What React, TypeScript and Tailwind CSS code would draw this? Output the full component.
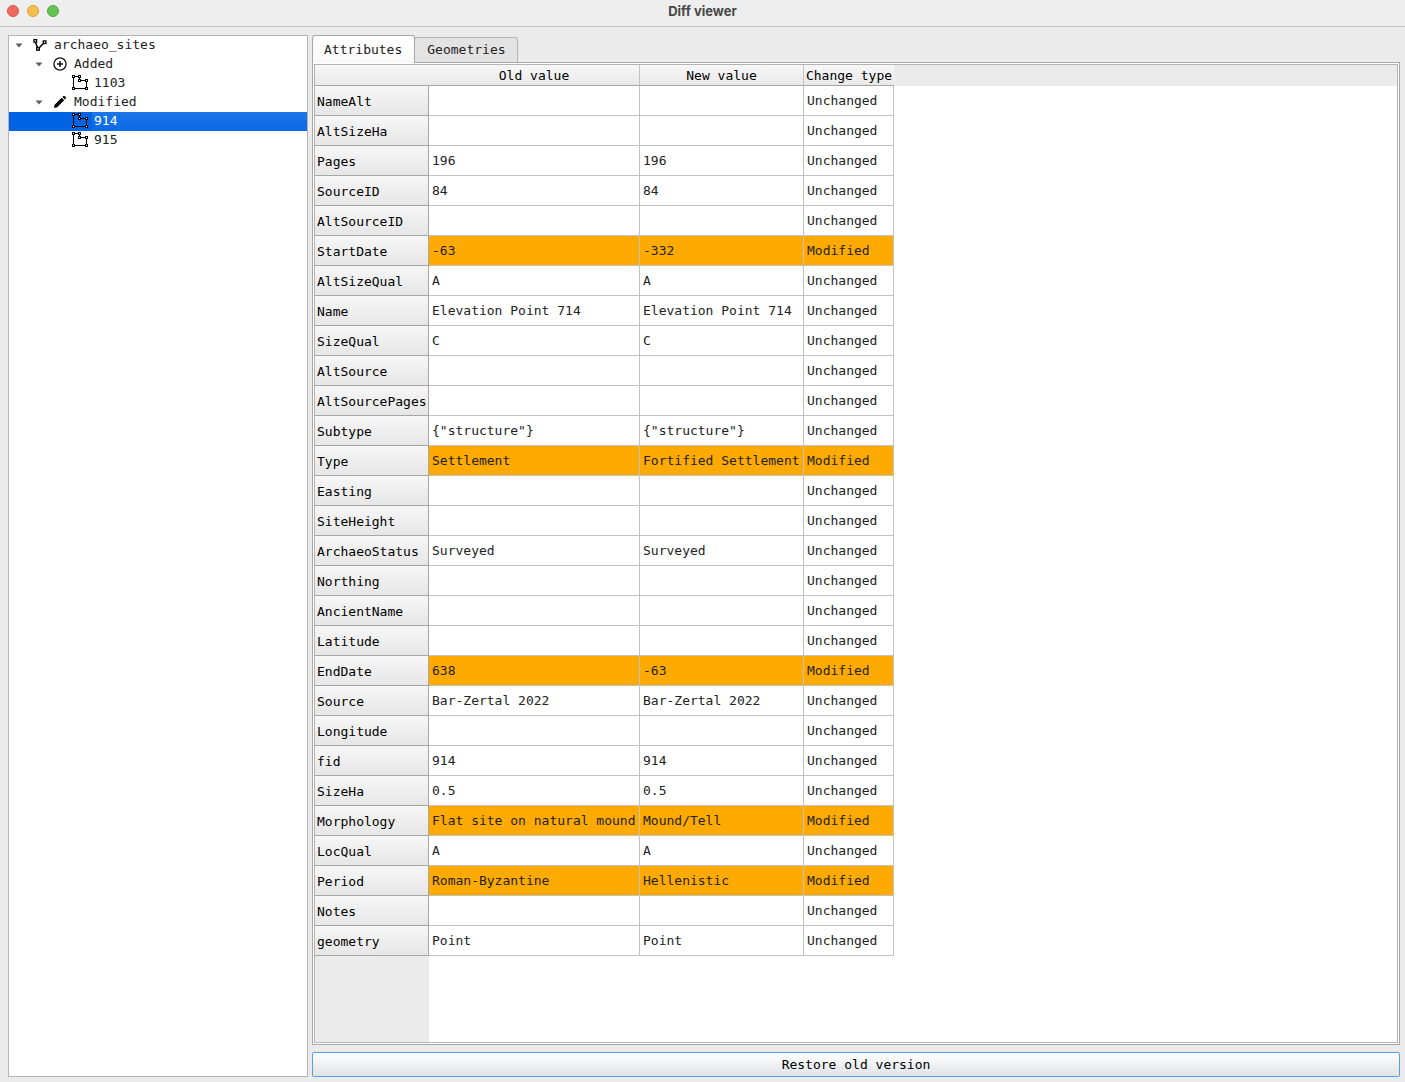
import React from "react";

type Row = { name: string; before: string; after: string };

const rows: Row[] = [
  { name: "NameAlt", before: "", after: "" },
  { name: "AltSizeHa", before: "", after: "" },
  { name: "Pages", before: "196", after: "196" },
  { name: "SourceID", before: "84", after: "84" },
  { name: "AltSourceID", before: "", after: "" },
  { name: "StartDate", before: "-63", after: "-332" },
  { name: "AltSizeQual", before: "A", after: "A" },
  { name: "Name", before: "Elevation Point 714", after: "Elevation Point 714" },
  { name: "SizeQual", before: "C", after: "C" },
  { name: "AltSource", before: "", after: "" },
  { name: "AltSourcePages", before: "", after: "" },
  { name: "Subtype", before: '{"structure"}', after: '{"structure"}' },
  { name: "Type", before: "Settlement", after: "Fortified Settlement" },
  { name: "Easting", before: "", after: "" },
  { name: "SiteHeight", before: "", after: "" },
  { name: "ArchaeoStatus", before: "Surveyed", after: "Surveyed" },
  { name: "Northing", before: "", after: "" },
  { name: "AncientName", before: "", after: "" },
  { name: "Latitude", before: "", after: "" },
  { name: "EndDate", before: "638", after: "-63" },
  { name: "Source", before: "Bar-Zertal 2022", after: "Bar-Zertal 2022" },
  { name: "Longitude", before: "", after: "" },
  { name: "fid", before: "914", after: "914" },
  { name: "SizeHa", before: "0.5", after: "0.5" },
  { name: "Morphology", before: "Flat site on natural mound", after: "Mound/Tell" },
  { name: "LocQual", before: "A", after: "A" },
  { name: "Period", before: "Roman-Byzantine", after: "Hellenistic" },
  { name: "Notes", before: "", after: "" },
  { name: "geometry", before: "Point", after: "Point" },
];

function Arrow() {
  return (
    <svg className="h-4 w-4 shrink-0" viewBox="0 0 16 16" aria-hidden="true">
      <path d="M4.500 6.500h7L8 10.500z" fill="#5f5f5f" />
    </svg>
  );
}

function LayerIcon() {
  return (
    <svg className="h-4 w-4 shrink-0" viewBox="0 0 16 16" fill="none" stroke="#000" aria-hidden="true">
      <path d="M3.500 5.500 6 11.500M6.500 11.500 12.300 5.500" strokeWidth="1.500" />
      <g fill="#fff" strokeWidth="1.300">
        <rect x="2" y="2.600" width="2.600" height="2.600" />
        <rect x="11.300" y="3.900" width="2.600" height="2.600" />
        <rect x="4.700" y="10.600" width="2.600" height="2.600" />
      </g>
    </svg>
  );
}

function PlusIcon() {
  return (
    <svg className="h-4 w-4 shrink-0" viewBox="0 0 16 16" fill="none" stroke="#111" aria-hidden="true">
      <circle cx="8" cy="8" r="6.100" strokeWidth="1.300" />
      <path d="M8 5v6M5 8h6" strokeWidth="1.500" />
    </svg>
  );
}

function PencilIcon() {
  return (
    <svg className="h-4 w-4 shrink-0" viewBox="0 0 16 16" fill="#000" aria-hidden="true">
      <path d="M2 14l.6-3.200 7.100-7 2.500 2.400L5.200 13.300zM10.400 3.100l.8-.8c.5-.5 1.200-.5 1.700 0l.8.8c.5.5.5 1.100 0 1.600l-.8.8z" />
    </svg>
  );
}

function PolygonIcon() {
  return (
    <svg className="mt-px h-4 w-4 shrink-0" viewBox="0 0 16 16" fill="none" stroke="#000" shapeRendering="crispEdges" aria-hidden="true">
      <path d="M1.500 1.500h6v4h7v8h-13z" />
      <g fill="#fff">
        <rect x="0.500" y="0.500" width="2" height="2" />
        <rect x="6.500" y="0.500" width="2" height="2" />
        <rect x="6.500" y="4.500" width="2" height="2" />
        <rect x="13.500" y="4.500" width="2" height="2" />
        <rect x="0.500" y="12.500" width="2" height="2" />
        <rect x="13.500" y="12.500" width="2" height="2" />
      </g>
    </svg>
  );
}

function FeatureItem({ label, selected }: { label: string; selected?: boolean }) {
  return (
    <li
      role="treeitem"
      aria-selected={!!selected}
      className={
        selected
          ? "flex h-[19px] items-start bg-[#0063e1] pl-[63px] text-white"
          : "flex h-[19px] items-start pl-[63px]"
      }
    >
      <PolygonIcon />
      <span
        className={
          selected
            ? "ml-1 h-full flex-1 bg-linear-to-b from-[#1c76e8] to-[#0868e6] pt-px pl-[2px]"
            : "ml-1 pt-px pl-[2px]"
        }
      >
        {label}
      </span>
    </li>
  );
}

const headCell =
  "border-b border-b-[#a6a6a6] bg-linear-to-b from-[#f7f7f7] to-[#e9e9e9] p-0 pt-px font-normal text-black";

export default function App() {
  return (
    <div className="flex min-h-screen flex-col bg-[#ebebeb] font-['DejaVu_Sans_Mono',monospace] text-[13px] leading-4 text-[#222]">
      <header className="grid h-[27px] shrink-0 grid-cols-3 items-center border-b border-[#c4c4c4] bg-[#eeeeee] pb-1">
        <div className="flex gap-2 pl-[7px]">
          <button aria-label="Close" className="h-3 w-3 rounded-full border border-[#d5564a] bg-[#ed6a5f]" />
          <button aria-label="Minimize" className="h-3 w-3 rounded-full border border-[#dba136] bg-[#f5bf4f]" />
          <button aria-label="Zoom" className="h-3 w-3 rounded-full border border-[#51a73f] bg-[#61c554]" />
        </div>
        <h1 className="text-center font-[Inter,sans-serif] text-[13px] font-bold text-[#474747]">Diff viewer</h1>
      </header>

      <main className="flex flex-1 gap-1 pt-2 pr-[5px] pb-[5px] pl-2">
        <nav aria-label="Changes" className="w-[300px] shrink-0 border border-[#b4b4b4] bg-white">
          <ul role="tree">
            <li role="treeitem" aria-expanded="true">
              <div className="flex h-[19px] items-center pb-px pl-[2px]">
                <Arrow />
                <span className="ml-[5px] flex items-center gap-[6px]">
                  <LayerIcon />
                  archaeo_sites
                </span>
              </div>
              <ul role="group">
                <li role="treeitem" aria-expanded="true">
                  <div className="flex h-[19px] items-center pb-px pl-[22px]">
                    <Arrow />
                    <span className="ml-[5px] flex items-center gap-[6px]">
                      <PlusIcon />
                      Added
                    </span>
                  </div>
                  <ul role="group">
                    <FeatureItem label="1103" />
                  </ul>
                </li>
                <li role="treeitem" aria-expanded="true">
                  <div className="flex h-[19px] items-center pb-px pl-[22px]">
                    <Arrow />
                    <span className="ml-[5px] flex items-center gap-[6px]">
                      <PencilIcon />
                      Modified
                    </span>
                  </div>
                  <ul role="group">
                    <FeatureItem label="914" selected />
                    <FeatureItem label="915" />
                  </ul>
                </li>
              </ul>
            </li>
          </ul>
        </nav>

        <section className="flex min-w-0 flex-1 flex-col">
          <div role="tablist" className="flex h-[27px] shrink-0 items-end">
            <button
              role="tab"
              aria-selected="true"
              className="z-10 -mb-px h-7 rounded-t-[3px] border border-b-0 border-[#a8a8a8] bg-linear-to-b from-white to-[#f8f8f8] pr-3 pl-[11px]"
            >
              Attributes
            </button>
            <button
              role="tab"
              aria-selected="false"
              className="-ml-px h-[25px] rounded-t-[3px] border border-b-0 border-[#b4b4b4] bg-[#e3e3e3] pr-[11px] pl-3"
            >
              Geometries
            </button>
          </div>

          <div role="tabpanel" className="flex flex-1 flex-col border border-[#a8a8a8] bg-white p-px">
            <div className="flex flex-1 flex-col border border-[#b4b4b4] bg-white">
              <div className="flex flex-1 bg-linear-to-r from-[#ebebeb] from-[114px] to-white to-[114px]">
                <table className="h-max table-fixed border-separate border-spacing-0 text-left">
                  <colgroup>
                    <col className="w-[114px]" />
                    <col className="w-[211px]" />
                    <col className="w-[164px]" />
                    <col className="w-[90px]" />
                  </colgroup>
                  <thead>
                    <tr className="h-[21px] text-center">
                      <th className={headCell} aria-label="Attribute" />
                      <th scope="col" className={headCell + " border-r border-r-[#c2c2c2]"}>Old value</th>
                      <th scope="col" className={headCell + " border-r border-r-[#c2c2c2]"}>New value</th>
                      <th scope="col" className={headCell}>Change type</th>
                    </tr>
                  </thead>
                  <tbody>
                    {rows.map((r) => {
                      const modified = r.before !== r.after;
                      const cell = modified
                        ? "border-r border-b border-[#c2c2c2] bg-[#ffaa00] p-0 pl-[3px] whitespace-nowrap"
                        : "border-r border-b border-[#c2c2c2] p-0 pl-[3px] whitespace-nowrap";
                      return (
                        <tr key={r.name} className="h-[30px]">
                          <th
                            scope="row"
                            className="border-r border-b border-[#a6a6a6] bg-linear-to-b from-[#f7f7f7] to-[#e6e6e6] p-0 pt-[2px] pl-[2px] text-left font-normal text-black"
                          >
                            {r.name}
                          </th>
                          <td className={cell}>{r.before}</td>
                          <td className={cell}>{r.after}</td>
                          <td className={cell}>{modified ? "Modified" : "Unchanged"}</td>
                        </tr>
                      );
                    })}
                  </tbody>
                </table>
                <div className="h-[21px] flex-1 bg-[#ebebeb]" />
              </div>
            </div>
          </div>

          <button className="mt-[7px] h-[25px] shrink-0 rounded-[2px] border border-[#5a9de2] bg-linear-to-b from-white to-[#dfe3e8] text-black">
            Restore old version
          </button>
        </section>
      </main>
    </div>
  );
}
